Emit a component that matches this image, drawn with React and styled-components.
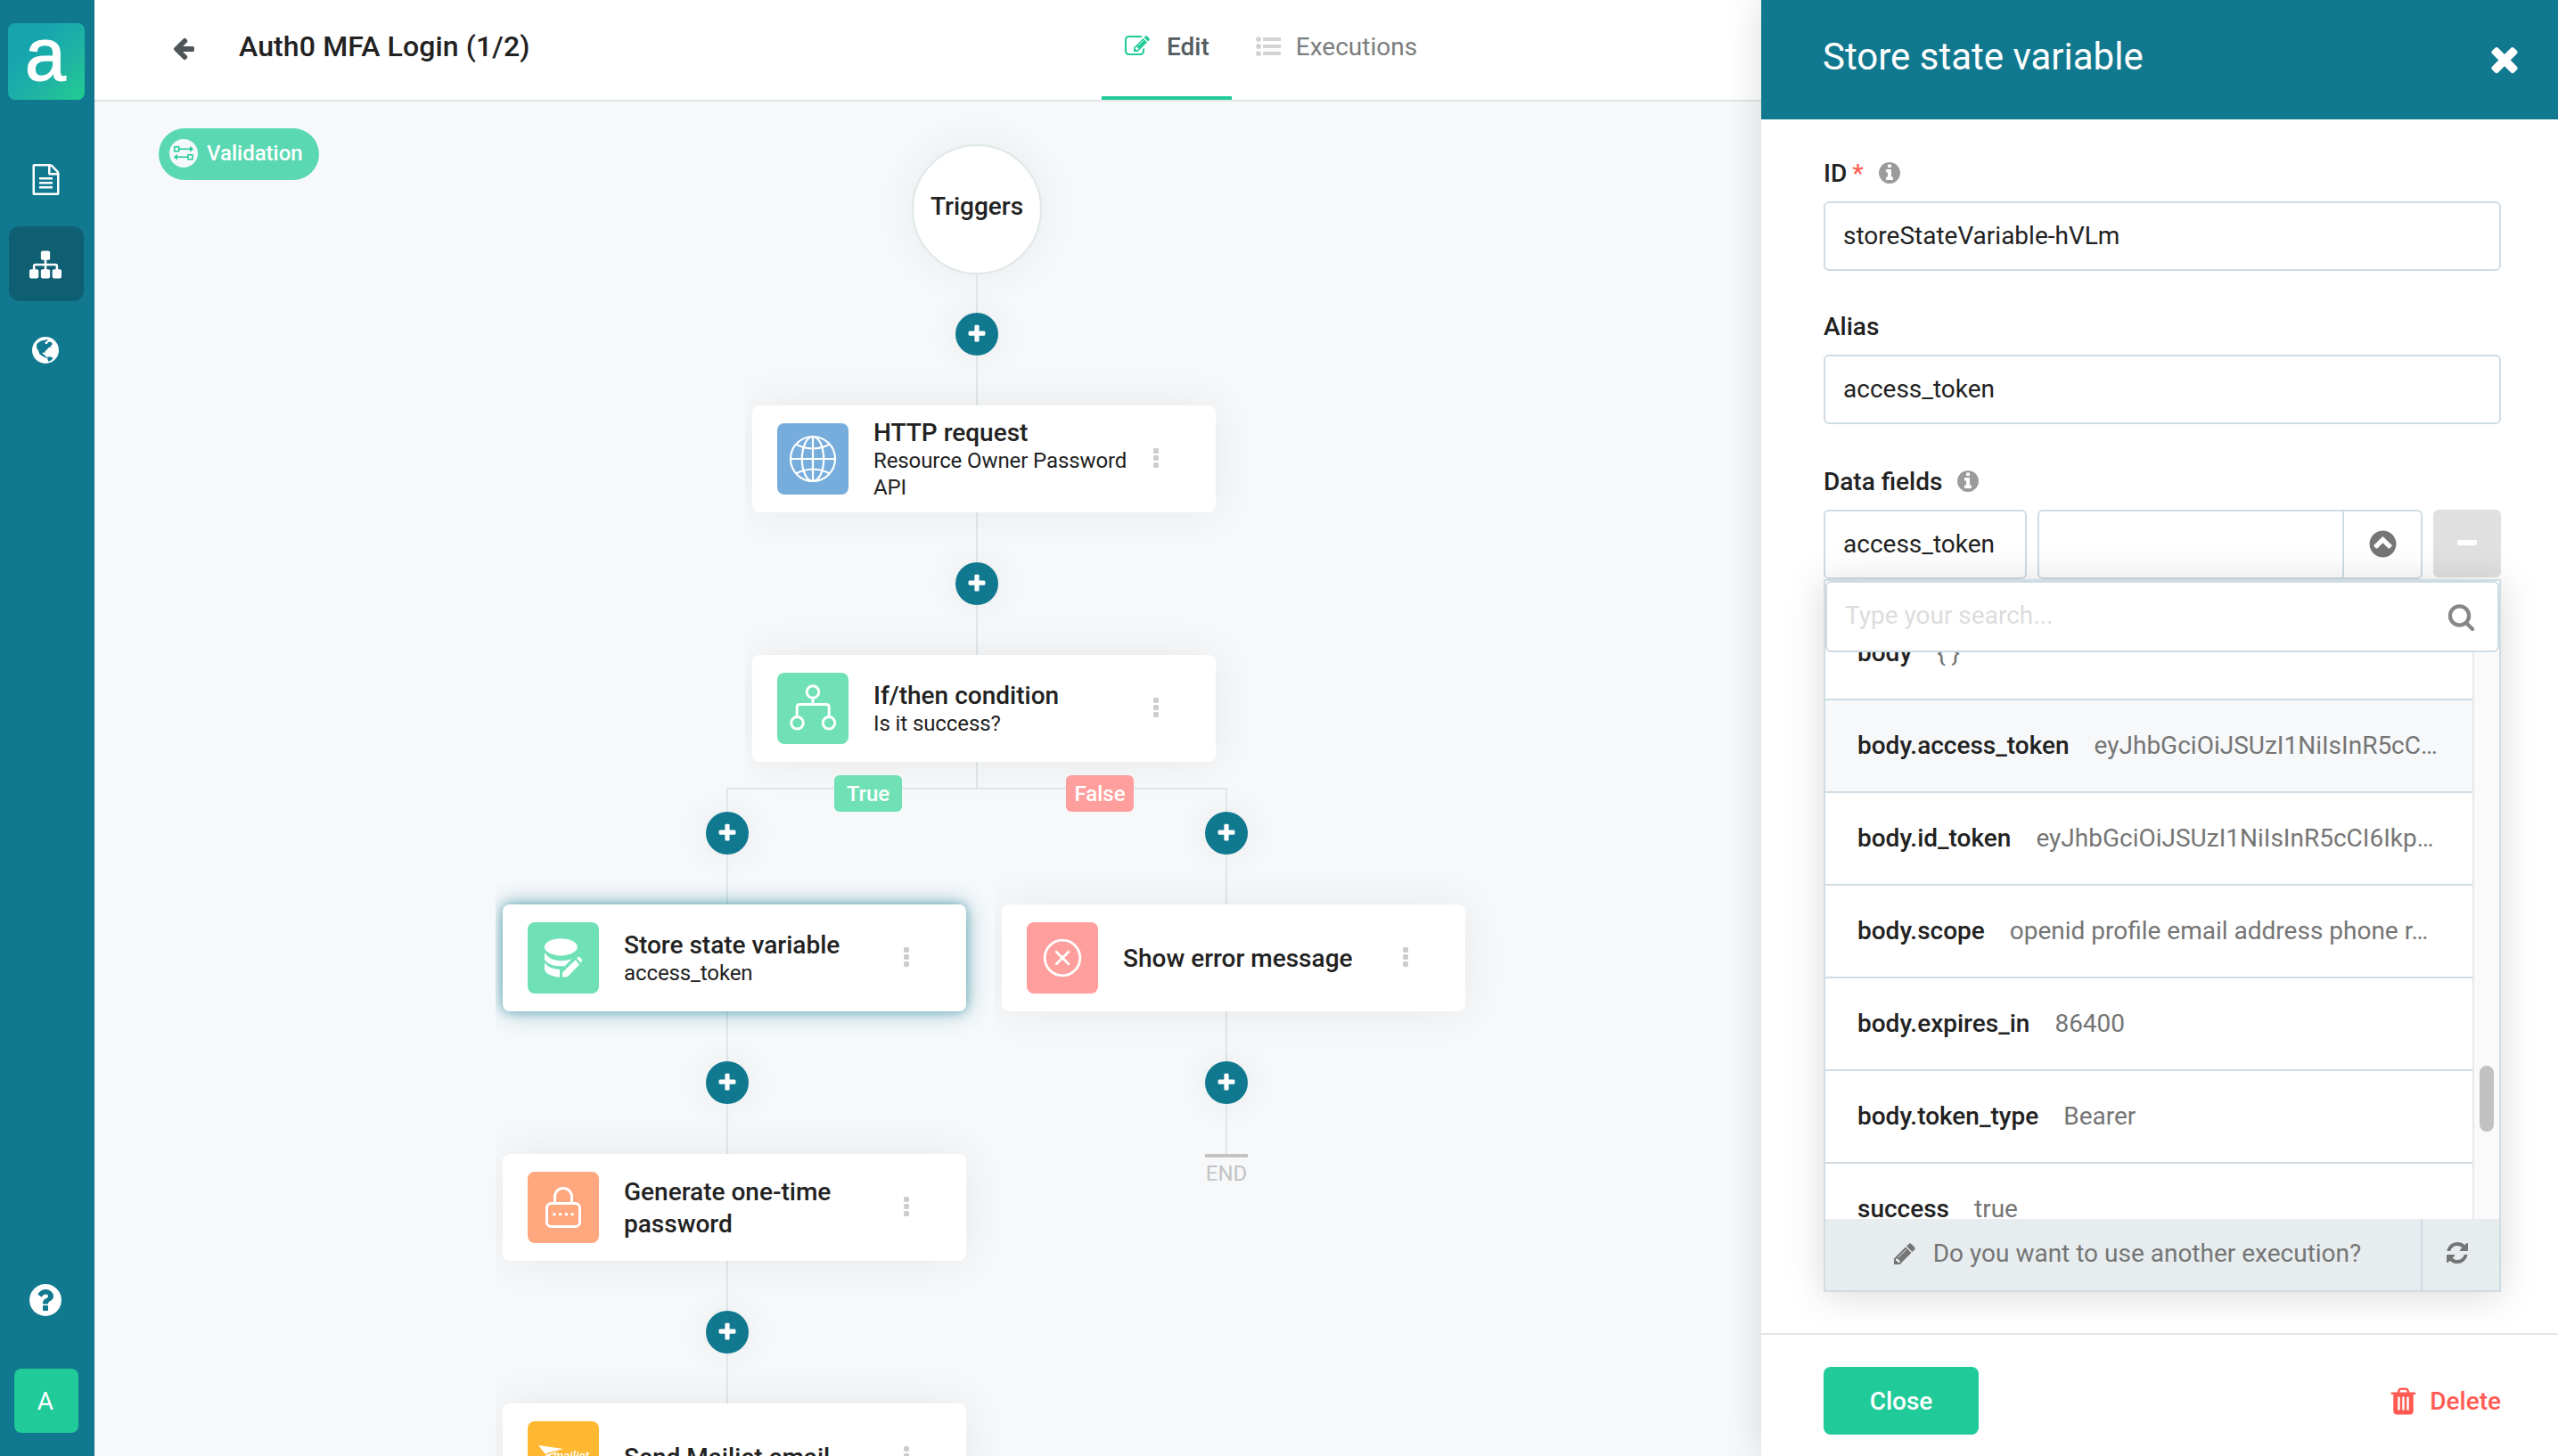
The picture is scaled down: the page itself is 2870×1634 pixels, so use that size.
import React from 'react';
import styled, { createGlobalStyle, css } from 'styled-components';

const GlobalStyle = createGlobalStyle`
    * {
        box-sizing: border-box;
    }

    body {
        margin: 0;
        overflow: hidden;
        font-family: Roboto, "Liberation Sans", sans-serif;
        font-size: 28px;
        color: #222;
    }
`;

const teal = '#11798f';
const green = '#20ca99';
const mint = '#70e1b7';
const salmon = '#ff9f9d';
const line = '#e0e7e8';
const fieldBorder = '#cfdce3';

const RING = 'q0 209-103 385.5t-279.5 279.5-385.5 103-385.5-103-279.5-279.5-103-385.5 103-385.5 279.5-279.5 385.5-103 385.5 103 279.5 279.5 103 385.5z';

const icons = {
    plus: 'M1600 736v192q0 40-28 68t-68 28h-416v416q0 40-28 68t-68 28h-192q-40 0-68-28t-28-68v-416h-416q-40 0-68-28t-28-68v-192q0-40 28-68t68-28h416v-416q0-40 28-68t68-28h192q40 0 68 28t28 68v416h416q40 0 68 28t28 68z',
    minus: 'M1600 736v192q0 40-28 68t-68 28h-1216q-40 0-68-28t-28-68v-192q0-40 28-68t68-28h1216q40 0 68 28t28 68z',
    times: 'M1490 1322q0 40-28 68l-136 136q-28 28-68 28t-68-28l-294-294-294 294q-28 28-68 28t-68-28l-136-136q-28-28-28-68t28-68l294-294-294-294q-28-28-28-68t28-68l136-136q28-28 68-28t68 28l294 294 294-294q28-28 68-28t68 28l136 136q28 28 28 68t-28 68l-294 294 294 294q28 28 28 68z',
    info: `M1152 1376v-160q0-14-9-23t-23-9h-96v-512q0-14-9-23t-23-9h-320q-14 0-23 9t-9 23v160q0 14 9 23t23 9h96v320h-96q-14 0-23 9t-9 23v160q0 14 9 23t23 9h448q14 0 23-9t9-23zm-128-896v-160q0-14-9-23t-23-9h-192q-14 0-23 9t-9 23v160q0 14 9 23t23 9h192q14 0 23-9t9-23zm640 416${RING}`,
    question: `M1024 1376v-192q0-14-9-23t-23-9h-192q-14 0-23 9t-9 23v192q0 14 9 23t23 9h192q14 0 23-9t9-23zm256-672q0-88-55.5-163t-138.5-116-170-41q-243 0-371 213-15 24 8 42l132 100q7 6 19 6 16 0 25-12 53-68 86-92 34-24 86-24 48 0 85.5 26t37.5 59q0 38-20 61t-68 45q-63 28-115.5 86.5t-52.5 125.5v36q0 14 9 23t23 9h192q14 0 23-9t9-23q0-19 21.5-49.5t54.5-49.5q32-18 49-28.5t46-35 44.5-48 28-60.5 12.5-81zm384 192${RING}`,
    chevronUp: `M1293 1139l102-102q19-19 19-45t-19-45l-454-454q-19-19-45-19t-45 19l-454 454q-19 19-19 45t19 45l102 102q19 19 45 19t45-19l307-307 307 307q19 19 45 19t45-19zm371-243${RING}`,
    pencil: 'M491 1536l91-91-235-235-91 91v107h128v128h107zm523-928q0-22-22-22-10 0-17 7l-542 542q-7 7-7 17 0 22 22 22 10 0 17-7l542-542q7-7 7-17zm-54-192l416 416-832 832h-416v-416zm683 96q0 53-37 90l-166 166-416-416 166-165q36-38 90-38 53 0 91 38l235 234q37 39 37 91z',
    refresh: 'M1639 1056q0 5-1 7-64 268-268 434.5t-478 166.5q-146 0-282.5-55t-243.5-157l-129 129q-19 19-45 19t-45-19-19-45v-448q0-26 19-45t45-19h448q26 0 45 19t19 45-19 45l-137 137q71 66 161 102t187 36q134 0 250-65t186-179q11-17 53-117 8-23 30-23h192q13 0 22.5 9.5t9.5 22.5zm25-800v448q0 26-19 45t-45 19h-448q-26 0-45-19t-19-45 19-45l138-138q-148-137-349-137-134 0-250 65t-186 179q-11 17-53 117-8 23-30 23h-199q-13 0-22.5-9.5t-9.5-22.5v-7q65-268 270-434.5t480-166.5q146 0 284 55.5t245 156.5l130-129q19-19 45-19t45 19 19 45z',
    trash: 'M704 1376v-704q0-14-9-23t-23-9h-64q-14 0-23 9t-9 23v704q0 14 9 23t23 9h64q14 0 23-9t9-23zm256 0v-704q0-14-9-23t-23-9h-64q-14 0-23 9t-9 23v704q0 14 9 23t23 9h64q14 0 23-9t9-23zm256 0v-704q0-14-9-23t-23-9h-64q-14 0-23 9t-9 23v704q0 14 9 23t23 9h64q14 0 23-9t9-23zm-544-992h448l-48-117q-7-9-17-11h-317q-10 2-17 11zm928 32v64q0 14-9 23t-23 9h-96v948q0 83-47 143.5t-113 60.5h-832q-66 0-113-58.5t-47-141.5v-952h-96q-14 0-23-9t-9-23v-64q0-14 9-23t23-9h309l70-167q15-37 54-63t79-26h320q40 0 79 26t54 63l70 167h309q14 0 23 9t9 23z',
    sitemap: 'M1792 1248v320q0 40-28 68t-68 28h-320q-40 0-68-28t-28-68v-320q0-40 28-68t68-28h96v-192h-512v192h96q40 0 68 28t28 68v320q0 40-28 68t-68 28h-320q-40 0-68-28t-28-68v-320q0-40 28-68t68-28h96v-192h-512v192h96q40 0 68 28t28 68v320q0 40-28 68t-68 28h-320q-40 0-68-28t-28-68v-320q0-40 28-68t68-28h96v-192q0-52 38-90t90-38h512v-192h-96q-40 0-68-28t-28-68v-320q0-40 28-68t68-28h320q40 0 68 28t28 68v320q0 40-28 68t-68 28h-96v192h512q52 0 90 38t38 90v192h96q40 0 68 28t28 68z',
    file: 'M1596 380q28 28 48 76t20 88v1152q0 40-28 68t-68 28h-1344q-40 0-68-28t-28-68v-1600q0-40 28-68t68-28h896q40 0 88 20t76 48zm-444-244v376h376q-10-29-22-41l-313-313q-12-12-41-22zm384 1528v-1024h-416q-40 0-68-28t-28-68v-416h-768v1536h1280zm-1024-864q0-14 9-23t23-9h704q14 0 23 9t9 23v64q0 14-9 23t-23 9h-704q-14 0-23-9t-9-23v-64zm736 224q14 0 23 9t9 23v64q0 14-9 23t-23 9h-704q-14 0-23-9t-9-23v-64q0-14 9-23t23-9h704zm0 256q14 0 23 9t9 23v64q0 14-9 23t-23 9h-704q-14 0-23-9t-9-23v-64q0-14 9-23t23-9h704z',
    arrowLeft: 'M1664 896v128q0 53-32.5 90.5t-84.5 37.5h-704l293 294q38 36 38 90t-38 90l-75 76q-37 37-90 37-52 0-91-37l-651-652q-37-37-37-90 0-52 37-91l651-650q38-38 91-38 52 0 90 38l75 74q38 38 38 91t-38 91l-293 293h704q52 0 84.5 37.5t32.5 90.5z',
    list: 'M384 1408q0 80-56 136t-136 56-136-56-56-136 56-136 136-56 136 56 56 136zm0-512q0 80-56 136t-136 56-136-56-56-136 56-136 136-56 136 56 56 136zm1408 416v192q0 13-9.5 22.5t-22.5 9.5h-1216q-13 0-22.5-9.5t-9.5-22.5v-192q0-13 9.5-22.5t22.5-9.5h1216q13 0 22.5 9.5t9.5 22.5zm-1408-928q0 80-56 136t-136 56-136-56-56-136 56-136 136-56 136 56 56 136zm1408 416v192q0 13-9.5 22.5t-22.5 9.5h-1216q-13 0-22.5-9.5t-9.5-22.5v-192q0-13 9.5-22.5t22.5-9.5h1216q13 0 22.5 9.5t9.5 22.5zm0-512v192q0 13-9.5 22.5t-22.5 9.5h-1216q-13 0-22.5-9.5t-9.5-22.5v-192q0-13 9.5-22.5t22.5-9.5h1216q13 0 22.5 9.5t9.5 22.5z',
    edit: 'M888 1184l116-116-152-152-116 116v56h96v96h56zm440-720q-16-16-33 1l-350 350q-17 17-1 33t33-1l350-350q17-17 1-33zm80 594v190q0 119-84.5 203.5t-203.5 84.5h-832q-119 0-203.5-84.5t-84.5-203.5v-832q0-119 84.5-203.5t203.5-84.5h832q63 0 117 25 15 7 18 23 3 17-9 29l-49 49q-14 14-32 8-23-6-45-6h-832q-66 0-113 47t-47 113v832q0 66 47 113t113 47h832q66 0 113-47t47-113v-126q0-13 9-22l64-64q15-15 35-7t20 29zm-96-738l288 288-672 672h-288v-288zm444 132l-92 92-288-288 92-92q28-28 68-28t68 28l152 152q28 28 28 68t-28 68z',
    dots: 'M1088 1248v192q0 40-28 68t-68 28h-192q-40 0-68-28t-28-68v-192q0-40 28-68t68-28h192q40 0 68 28t28 68zm0-512v192q0 40-28 68t-68 28h-192q-40 0-68-28t-28-68v-192q0-40 28-68t68-28h192q40 0 68 28t28 68zm0-512v192q0 40-28 68t-68 28h-192q-40 0-68-28t-28-68v-192q0-40 28-68t68-28h192q40 0 68 28t28 68z',
};

const Svg = styled.svg`
    display: block;
    flex: none;
    fill: currentColor;
`;

const Icon = ({ name, size = 28 }) => (
    <Svg width={size} height={size} viewBox="0 0 1792 1792">
        <path d={icons[name]} />
    </Svg>
);

const Page = styled.div`
    display: flex;
    width: 2870px;
    height: 1634px;
    overflow: hidden;
    background: #f6f8fa;
`;

/* ---------- sidebar ---------- */

const Sidebar = styled.nav`
    display: flex;
    flex-direction: column;
    align-items: center;
    flex: none;
    width: 106px;
    padding: 26px 4px 26px 0;
    background: ${teal};
    color: #fff;
`;

const Logo = styled.div`
    display: flex;
    justify-content: center;
    width: 86px;
    height: 86px;
    margin: 0 0 46px 1px;
    border-radius: 8px;
    background: linear-gradient(135deg, #16a5ae 30%, #20b5a3 65%, #21ca92 95%);
    font-family: "Liberation Mono", monospace;
    font-size: 84px;
    line-height: 84px;
    -webkit-text-stroke: 1.2px #fff;
`;

const NavItem = styled.a`
    display: flex;
    align-items: center;
    justify-content: center;
    width: 84px;
    height: 84px;
    margin: 0 0 12px 2px;
    padding: 2px 2px 0 0;
    border-radius: 12px;
    background: ${props => (props.$active ? '#0f5f73' : 'transparent')};
`;

const Help = styled.div`
    margin-top: auto;
    margin-bottom: 56px;
`;

const Avatar = styled.div`
    width: 72px;
    height: 72px;
    margin-left: 2px;
    padding-right: 2px;
    border-radius: 8px;
    background: ${green};
    font-size: 28px;
    line-height: 73px;
    text-align: center;
`;

const GlobeIcon = () => (
    <Svg width="30" height="30" viewBox="0 0 90 90">
        <circle cx="45" cy="45" r="45" />
        <path
            fill={teal}
            d="M15 32l1-8 11-9 8-2 15-4 4 2-9 6-3 5 8 3 5-8 9 0 5 8-6 4 2 5-8 1-6 7-6 5-2 7-6-2-2 6 7 2 3 6 7 2-2 3-8-2-9-5-8-6-4-12-5-6z"
        />
        <path fill={teal} d="M52 68l8-1 11 4-6 8-10 4-3-7z" />
    </Svg>
);

/* ---------- main area ---------- */

const Main = styled.main`
    display: flex;
    flex-direction: column;
    flex: none;
    width: 1870px;
`;

const Header = styled.header`
    display: flex;
    flex: none;
    width: 1870px;
    height: 114px;
    padding-left: 86px;
    background: #fff;
    border-bottom: 2px solid ${line};
`;

const Back = styled.span`
    display: flex;
    align-items: center;
    width: 76px;
    padding-bottom: 4px;
    color: #4d5559;
`;

const Title = styled.h1`
    width: 968px;
    margin: 0;
    font-size: 32px;
    font-weight: 500;
    letter-spacing: 0.12px;
    line-height: 105px;
`;

const Tab = styled.a`
    display: flex;
    align-items: center;
    gap: ${props => (props.$active ? 19 : 17)}px;
    height: 112px;
    padding: 0 ${props => (props.$active ? 25 : 27)}px 8px;
    font-weight: ${props => (props.$active ? 500 : 400)};
    color: ${props => (props.$active ? '#545c60' : '#7b7d7d')};
    ${props => props.$active && css`
        padding: 0 25px 4px 26px;
        border-bottom: 4px solid ${green};
    `}
`;

const TabIcon = styled.span`
    color: ${props => props.$color};
`;

const Canvas = styled.section`
    display: flex;
    align-items: flex-start;
    flex: 1;
    min-height: 0;
    overflow: hidden;
`;

const Tag = styled.div`
    display: flex;
    align-items: center;
    gap: 10px;
    width: 180px;
    height: 58px;
    margin: 30px 0 0 72px;
    padding: 0 0 2px 12px;
    border-radius: 29px;
    background: #59d8b1;
    color: #fff;
    font-size: 24px;
    font-weight: 500;
`;

const TagIcon = () => (
    <Svg width="32" height="32" viewBox="0 0 32 32">
        <circle cx="16" cy="16" r="16" fill="#f4f8f8" />
        <g fill="none" stroke={green} strokeWidth="1.5">
            <path d="M5.7 8.8h5v5h-5zM11 11.3h13M21 17.8h5v5h-5zM21 20.3H8" />
        </g>
        <path fill={green} d="M23 8l4.2 3.3L23 14.6zM9 17l-4.2 3.3L9 23.6z" />
    </Svg>
);

const Flow = styled.div`
    display: flex;
    flex-direction: column;
    align-items: center;
    width: 1080px;
    margin: 48px 0 0 198px;
`;

const Trigger = styled.div`
    width: 146px;
    height: 146px;
    border: 2px solid ${line};
    border-radius: 50%;
    background: #fff;
    box-shadow: 0 0 50px rgba(0, 0, 0, 0.06);
    font-weight: 500;
    line-height: 136px;
    text-align: center;
`;

const Stem = styled.div`
    width: 2px;
    height: ${props => props.$h || 56}px;
    background: ${line};
`;

const AddButton = styled.button`
    display: flex;
    align-items: center;
    justify-content: center;
    width: 48px;
    height: 48px;
    padding: 0;
    border: 0;
    border-radius: 50%;
    background: ${teal};
    color: #fff;
    box-shadow: 0 0 40px rgba(0, 0, 0, 0.07);
`;

const StepSlot = styled.div`
    width: 520px;
    padding-left: 8px;
`;

const Card = styled.div`
    display: flex;
    align-items: center;
    width: 520px;
    height: 120px;
    padding-left: 28px;
    border-radius: 8px;
    background: #fff;
    clip-path: inset(-60px -60px -60px -8px);
    box-shadow: ${props => (props.$selected
        ? '0 0 26px rgba(17, 121, 143, 0.45), 0 0 12px rgba(17, 121, 143, 0.45)'
        : '0 0 50px rgba(0, 0, 0, 0.07)')};
`;

const Tile = styled.div`
    flex: none;
    width: 80px;
    height: 80px;
    border-radius: 8px;
    background: ${props => props.$color};
    color: #fff;
`;

const CardText = styled.div`
    width: 300px;
    margin-left: 28px;
    padding-top: 1px;
`;

const CardTitle = styled.div`
    font-weight: 500;
    line-height: ${props => (props.$tight ? 33 : 36)}px;
`;

const CardSub = styled.div`
    font-size: 24px;
    letter-spacing: -0.1px;
    line-height: 30px;
`;

const More = styled.div`
    margin-left: 3px;
    color: #cdcdcd;
`;

const Branches = styled.div`
    display: grid;
    grid-template-columns: 520px 520px;
    column-gap: 40px;
`;

const Branch = styled.div`
    display: flex;
    flex-direction: column;
    align-items: center;
`;

const Fork = styled.div`
    position: relative;
    width: 562px;
    height: 27px;
    border: 2px solid ${line};
    border-bottom: 0;
`;

const Condition = styled.span`
    position: absolute;
    top: -16px;
    ${props => props.$side}: ${props => (props.$side === 'left' ? 119 : 103)}px;
    width: 76px;
    height: 41px;
    border-radius: 6px;
    background: ${props => props.$color};
    color: #fff;
    font-size: 24px;
    font-weight: 500;
    line-height: 43px;
    text-align: center;
`;

const End = styled.div`
    width: 48px;
    border-top: 4px solid #c3c3c3;
    color: #c3c3c3;
    font-size: 24px;
    line-height: 36px;
    text-align: center;
`;

const Stroke = ({ width = 3, children }) => (
    <Svg width="80" height="80" viewBox="-40 -40 80 80">
        <g fill="none" stroke="#fff" strokeWidth={width} strokeLinecap="round" strokeLinejoin="round">
            {children}
        </g>
    </Svg>
);

const HttpIcon = () => (
    <Stroke width={2.2}>
        <circle r="25" />
        <ellipse rx="12.2" ry="25" />
        <path d="M0-25V25M-25 0H25M-18-16Q0-7 18-16M-18 16Q0 7 18 16" />
    </Stroke>
);

const ConditionIcon = () => (
    <Stroke>
        <circle cy="-18.5" r="6.8" />
        <circle cx="-17.5" cy="16.3" r="6.8" />
        <circle cx="18" cy="16.3" r="6.8" />
        <path d="M0-11.5V-4.5M-17.8 9V-1.5Q-17.8-4.5-14.8-4.5H15.2Q18.2-4.5 18.2-1.5V9" />
    </Stroke>
);

const StoreIcon = () => (
    <Svg width="80" height="80" viewBox="-40 -40 80 80">
        <ellipse cx="-2.7" cy="-12.2" rx="18.4" ry="9.6" />
        <path d="M-21-6Q-16 2.8-3 3.2Q4 3 9.5 1.2L1.5 9.3Q-16 10-21 2Z" />
        <path d="M-21 5.5Q-16 12.5-4 13V21.7Q-18 20.5-21 13.5Z" />
        <path d="M-1 16.5L13.7 2.3L18 7.6L5 21L-1 21.7Z" />
        <path d="M15.2.5L17.5-1.8L21.6 2.8L19.5 5.5Z" />
    </Svg>
);

const ErrorIcon = () => (
    <Stroke width={2.8}>
        <circle r="19.8" />
        <path d="M-6.8-6.8L6.8 6.8M6.8-6.8L-6.8 6.8" />
    </Stroke>
);

const LockIcon = () => (
    <Stroke>
        <rect x="-18.5" y="-4.5" width="37" height="26" rx="5" />
        <path d="M-9.5-5V-12A9.5 9.5 0 0 1 9.5-12V-5" />
        <path strokeWidth="3.6" d="M-10.2 7.7h.01M-3.4 7.7h.01M3.4 7.7h.01M10.2 7.7h.01" />
    </Stroke>
);

const MailjetText = styled.text`
    font-size: 13px;
    font-style: italic;
    font-weight: 500;
`;

const MailjetIcon = () => (
    <Svg width="80" height="80" viewBox="0 0 80 80">
        <path d="M12 27L40 31L24 35L20 37Z" />
        <path d="M20 38L36 33L25 38.5L21 49Z" />
        <MailjetText x="29" y="43" textLength="40">mailjet</MailjetText>
    </Svg>
);

const Add = () => (
    <AddButton>
        <Icon name="plus" size={24} />
    </AddButton>
);

const Step = ({ color, icon, title, sub, selected }) => (
    <StepSlot>
        <Card $selected={selected}>
            <Tile $color={color}>{icon}</Tile>
            <CardText>
                <CardTitle $tight={!!sub}>{title}</CardTitle>
                {sub && <CardSub>{sub}</CardSub>}
            </CardText>
            <More>
                <Icon name="dots" />
            </More>
        </Card>
    </StepSlot>
);

/* ---------- side panel ---------- */

const Panel = styled.aside`
    display: flex;
    flex-direction: column;
    flex: none;
    position: relative;
    width: 894px;
    background: #fff;
    box-shadow: 0 0 40px rgba(0, 0, 0, 0.14);
`;

const PanelHeader = styled.div`
    display: flex;
    align-items: center;
    justify-content: space-between;
    flex: none;
    height: 134px;
    padding: 0 38px 3px 69px;
    background: ${teal};
    color: #fff;
`;

const PanelTitle = styled.h2`
    margin: 0;
    padding-bottom: 4px;
    font-size: 42px;
    font-weight: 400;
`;

const PanelBody = styled.div`
    flex: 1;
    padding: 42px 64px 0 70px;
`;

const Label = styled.div`
    display: flex;
    align-items: center;
    height: 36px;
    margin-bottom: 14px;
    font-weight: 500;
`;

const Required = styled.span`
    margin-left: 6px;
    color: #ff5b52;
`;

const Info = styled.span`
    margin-left: 15px;
    color: #9b9b9b;
`;

const Field = styled.div`
    width: ${props => props.$w || 760}px;
    height: 78px;
    padding-left: 20px;
    border: 2px solid ${fieldBorder};
    border-radius: 6px;
    background: #fff;
    line-height: 73px;
`;

const Group = styled.div`
    margin-bottom: ${props => props.$gap}px;
`;

const DataRow = styled.div`
    display: flex;
    gap: 12px;
`;

const Combo = styled(Field)`
    display: flex;
    justify-content: flex-end;
    padding: 0;
`;

const Toggle = styled.button`
    display: flex;
    align-items: center;
    justify-content: center;
    width: 88px;
    padding: 0 0 2px;
    border: 0;
    border-left: 2px solid ${fieldBorder};
    background: none;
    color: #757777;
`;

const Remove = styled.button`
    display: flex;
    align-items: center;
    justify-content: center;
    width: 76px;
    height: 76px;
    padding: 0;
    border: 0;
    border-radius: 6px;
    background: #e0e0e0;
    color: #fff;
`;

const Dropdown = styled.div`
    position: relative;
    width: 760px;
    height: 800px;
    border: 2px solid ${fieldBorder};
    background: #fff;
    box-shadow: 0 4px 40px rgba(0, 0, 0, 0.15);
`;

const Search = styled.div`
    display: flex;
    align-items: center;
    justify-content: space-between;
    height: 80px;
    padding: 0 25px 0 20px;
    border: 2px solid ${fieldBorder};
    border-radius: 6px;
    color: #dcdcdc;
`;

const Placeholder = styled.span`
    padding-bottom: 4px;
`;

const Scroller = styled.div`
    display: flex;
    height: 636px;
    overflow: hidden;
`;

const Options = styled.div`
    flex: 1;
    margin-top: -50px;
`;

const Option = styled.div`
    display: flex;
    gap: 28px;
    height: 104px;
    padding-left: 36px;
    border-bottom: 2px solid ${fieldBorder};
    background: ${props => (props.$active ? '#f6f8fa' : '#fff')};
    line-height: 101px;
    white-space: nowrap;
`;

const Key = styled.span`
    font-weight: 500;
`;

const Value = styled.span`
    color: #757575;
`;

const Track = styled.div`
    width: 30px;
    padding: 464px 0 0 6px;
    border-left: 2px solid #e8e8e8;
    background: #fafafa;
`;

const Thumb = styled.div`
    width: 16px;
    height: 74px;
    border-radius: 8px;
    background: #c1c1c1;
`;

const Another = styled.div`
    display: flex;
    height: 80px;
    background: #e7edef;
    color: #757575;
`;

const AnotherText = styled.div`
    display: flex;
    align-items: center;
    justify-content: center;
    gap: 18px;
    flex: 1;
    padding: 0 0 3px 8px;
`;

const Refresh = styled.div`
    display: flex;
    align-items: center;
    justify-content: center;
    width: 88px;
    padding: 0 8px 4px 0;
    border-left: 2px solid ${fieldBorder};
`;

const PanelFooter = styled.div`
    display: flex;
    align-items: flex-start;
    justify-content: space-between;
    height: 138px;
    padding: 36px 64px 0 70px;
    border-top: 2px solid ${line};
`;

const CloseButton = styled.div`
    width: 174px;
    height: 76px;
    border-radius: 8px;
    background: ${green};
    color: #fff;
    font-weight: 500;
    line-height: 77px;
    text-align: center;
`;

const DeleteButton = styled.div`
    display: flex;
    align-items: center;
    gap: 12px;
    height: 76px;
    color: #ff5b52;
    font-weight: 500;
`;

const SearchIcon = () => (
    <Svg width="32" height="32" viewBox="0 0 32 32">
        <g fill="none" stroke="#858787" strokeWidth="4.2" strokeLinecap="round">
            <circle cx="14.5" cy="15" r="10.6" />
            <path d="M22.5 23.5L29 30" />
        </g>
    </Svg>
);

const options = [
    { name: 'body', value: '{ }' },
    { name: 'body.access_token', value: 'eyJhbGciOiJSUzI1NiIsInR5cC…', active: true },
    { name: 'body.id_token', value: 'eyJhbGciOiJSUzI1NiIsInR5cCI6Ikp…' },
    { name: 'body.scope', value: 'openid profile email address phone r…' },
    { name: 'body.expires_in', value: '86400' },
    { name: 'body.token_type', value: 'Bearer' },
    { name: 'success', value: 'true' },
];

const App = () => (
    <Page>
        <GlobalStyle />
        <Sidebar>
            <Logo>a</Logo>
            <NavItem><Icon name="file" size={35} /></NavItem>
            <NavItem $active><Icon name="sitemap" size={36} /></NavItem>
            <NavItem><GlobeIcon /></NavItem>
            <Help><Icon name="question" size={42} /></Help>
            <Avatar>A</Avatar>
        </Sidebar>

        <Main>
            <Header>
                <Back><Icon name="arrowLeft" /></Back>
                <Title>Auth0 MFA Login (1/2)</Title>
                <Tab $active>
                    <TabIcon $color={green}><Icon name="edit" /></TabIcon>
                    Edit
                </Tab>
                <Tab>
                    <TabIcon $color="#d2d4d4"><Icon name="list" /></TabIcon>
                    Executions
                </Tab>
            </Header>
            <Canvas>
                <Tag>
                    <TagIcon />
                    Validation
                </Tag>
                <Flow>
                    <Trigger>Triggers</Trigger>
                    <Stem $h={43} />
                    <Add />
                    <Stem />
                    <Step color="#76addd" icon={<HttpIcon />} title="HTTP request" sub="Resource Owner Password API" />
                    <Stem />
                    <Add />
                    <Stem />
                    <Step color={mint} icon={<ConditionIcon />} title="If/then condition" sub="Is it success?" />
                    <Stem $h={29} />
                    <Fork>
                        <Condition $side="left" $color={mint}>True</Condition>
                        <Condition $side="right" $color={salmon}>False</Condition>
                    </Fork>
                    <Branches>
                        <Branch>
                            <Add />
                            <Stem />
                            <Step selected color={mint} icon={<StoreIcon />} title="Store state variable" sub="access_token" />
                            <Stem />
                            <Add />
                            <Stem />
                            <Step color="#ffa77f" icon={<LockIcon />} title="Generate one-time password" />
                            <Stem />
                            <Add />
                            <Stem />
                            <Step color="#ffb831" icon={<MailjetIcon />} title="Send Mailjet email" />
                        </Branch>
                        <Branch>
                            <Add />
                            <Stem />
                            <Step color={salmon} icon={<ErrorIcon />} title="Show error message" />
                            <Stem />
                            <Add />
                            <Stem />
                            <End>END</End>
                        </Branch>
                    </Branches>
                </Flow>
            </Canvas>
        </Main>

        <Panel>
            <PanelHeader>
                <PanelTitle>Store state variable</PanelTitle>
                <Icon name="times" size={44} />
            </PanelHeader>
            <PanelBody>
                <Group $gap={44}>
                    <Label>
                        ID<Required>*</Required>
                        <Info><Icon name="info" /></Info>
                    </Label>
                    <Field>storeStateVariable-hVLm</Field>
                </Group>
                <Group $gap={46}>
                    <Label>Alias</Label>
                    <Field>access_token</Field>
                </Group>
                <Label>
                    Data fields
                    <Info><Icon name="info" /></Info>
                </Label>
                <DataRow>
                    <Field $w={228}>access_token</Field>
                    <Combo $w={432}>
                        <Toggle><Icon name="chevronUp" size={35} /></Toggle>
                    </Combo>
                    <Remove><Icon name="minus" /></Remove>
                </DataRow>
                <Dropdown>
                    <Search>
                        <Placeholder>Type your search...</Placeholder>
                        <SearchIcon />
                    </Search>
                    <Scroller>
                        <Options>
                            {options.map(option => (
                                <Option key={option.name} $active={option.active}>
                                    <Key>{option.name}</Key>
                                    <Value>{option.value}</Value>
                                </Option>
                            ))}
                        </Options>
                        <Track>
                            <Thumb />
                        </Track>
                    </Scroller>
                    <Another>
                        <AnotherText>
                            <Icon name="pencil" />
                            Do you want to use another execution?
                        </AnotherText>
                        <Refresh><Icon name="refresh" /></Refresh>
                    </Another>
                </Dropdown>
            </PanelBody>
            <PanelFooter>
                <CloseButton>Close</CloseButton>
                <DeleteButton>
                    <Icon name="trash" size={35} />
                    Delete
                </DeleteButton>
            </PanelFooter>
        </Panel>
    </Page>
);

export default App;
